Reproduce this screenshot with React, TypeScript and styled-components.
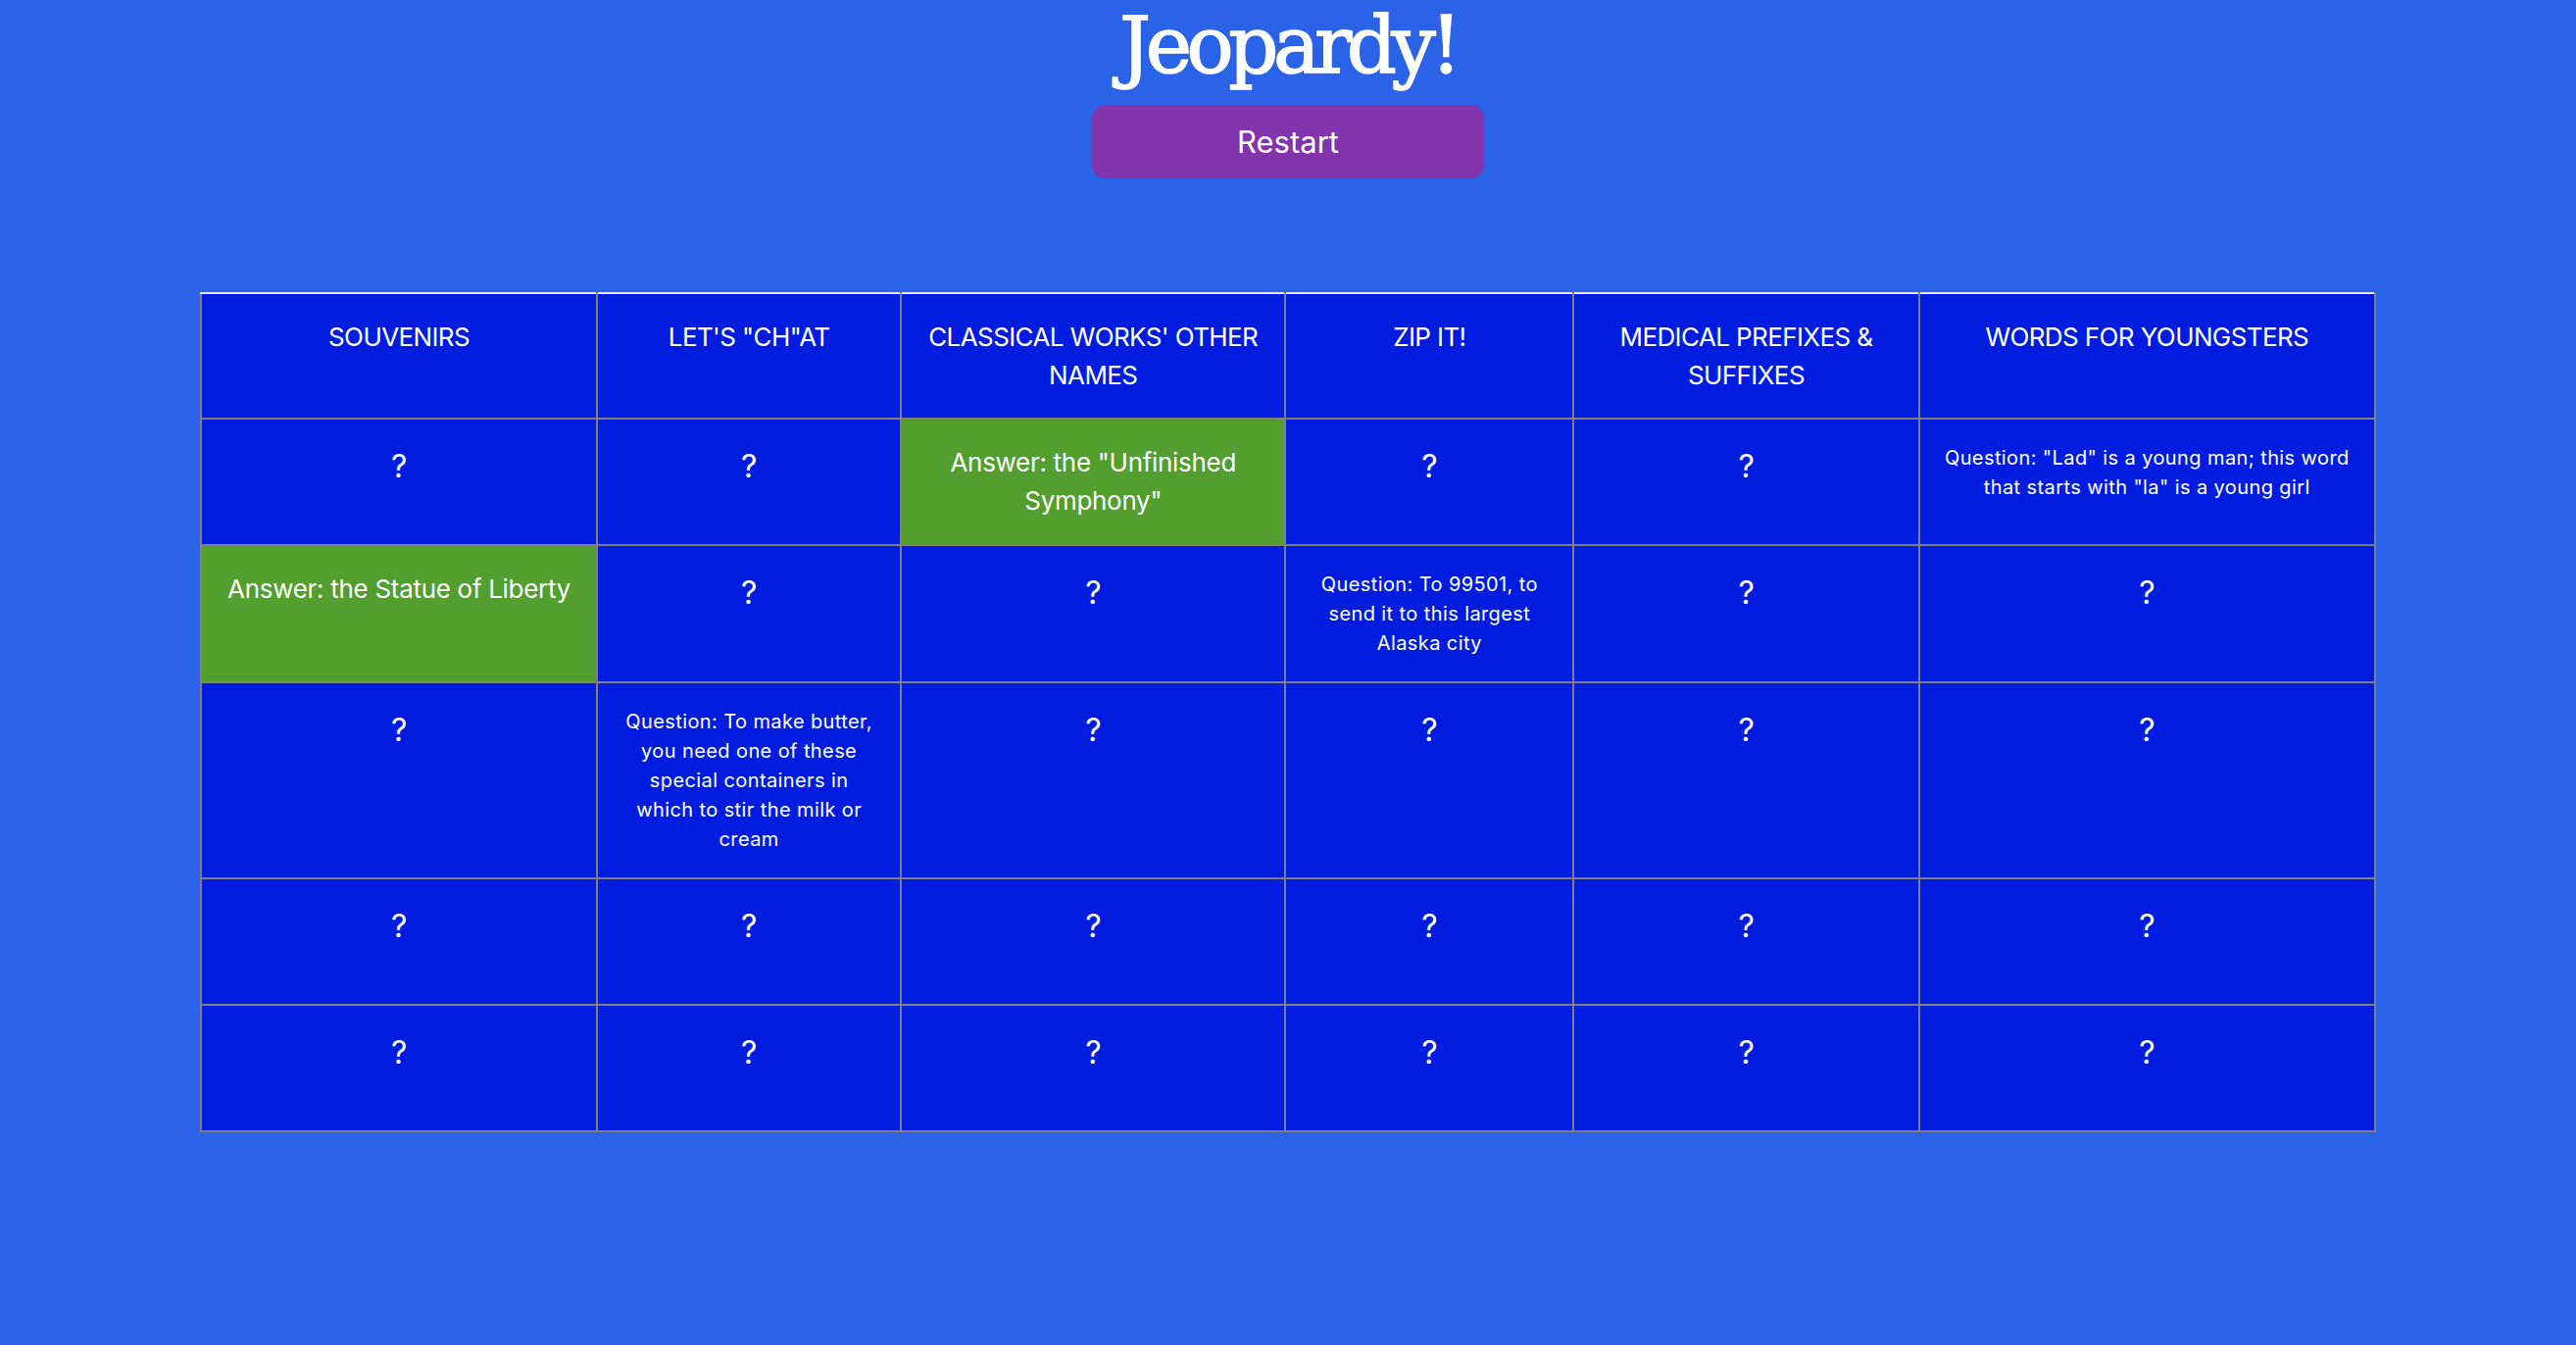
import React, { useState } from "react";
import styled, { createGlobalStyle } from "styled-components";

const GlobalStyle = createGlobalStyle`
  html, body {
    margin: 0;
    padding: 0;
    background: #2a63e8;
  }
  body {
    font-family: Inter, "Noto Sans", "Liberation Sans", sans-serif;
    color: #ffffff;
  }
`;

const Page = styled.main`
  min-height: 1372px;
  display: flex;
  flex-direction: column;
  align-items: center;
`;

const Title = styled.h1`
  margin: 0;
  height: 93px;
  font-family: "DejaVu Serif", "Liberation Serif", serif;
  font-weight: 400;
  font-size: 80px;
  line-height: 93px;
  color: #ffffff;
  letter-spacing: -5.5px;
  -webkit-text-stroke: 1.5px #ffffff;
`;

const RestartButton = styled.button`
  width: 400px;
  height: 75px;
  margin-top: 14px;
  border: none;
  border-radius: 14px;
  background: #8334ac;
  color: #ffffff;
  font-family: Inter, "Noto Sans", sans-serif;
  font-size: 31px;
  font-weight: 400;
  cursor: pointer;
`;

const Board = styled.table`
  width: 2220px;
  margin-top: 116px;
  border-collapse: collapse;
  table-layout: fixed;
  border: 2px solid #808080;
  border-top-color: #e6e6ea;
`;

const HeadCell = styled.th`
  padding: 24px;
  border: 2px solid #808080;
  border-top-color: #e6e6ea;
  background: #001ddf;
  vertical-align: top;
  font-size: 26px;
  font-weight: 400;
  line-height: 39px;
  letter-spacing: -0.6px;
  text-transform: uppercase;
`;

type CellState = "hidden" | "question" | "answer";

const Cell = styled.td<{ $state: CellState }>`
  box-sizing: border-box;
  height: 129px;
  padding: 24px;
  border: 2px solid #808080;
  background: ${(p) => (p.$state === "answer" ? "#529e2f" : "#001ddf")};
  vertical-align: top;
  text-align: center;
  font-size: ${(p) =>
    p.$state === "hidden" ? "32px" : p.$state === "question" ? "20px" : "26px"};
  line-height: 1.5;
  letter-spacing: ${(p) => (p.$state === "question" ? "0.4px" : "-0.3px")};
  cursor: pointer;
`;

const categories = [
  "Souvenirs",
  "Let's \"Ch\"at",
  "Classical Works' Other Names",
  "Zip It!",
  "Medical Prefixes & Suffixes",
  "Words for Youngsters",
];

const colWidths = [18.22, 13.98, 17.68, 13.26, 15.88, 20.98];

type CellData = { state: CellState; text: string };

const h: CellData = { state: "hidden", text: "?" };

const initialBoard: CellData[][] = [
  [
    h,
    h,
    { state: "answer", text: 'Answer: the "Unfinished Symphony"' },
    h,
    h,
    {
      state: "question",
      text: 'Question: "Lad" is a young man; this word that starts with "la" is a young girl',
    },
  ],
  [
    { state: "answer", text: "Answer: the Statue of Liberty" },
    h,
    h,
    {
      state: "question",
      text: "Question: To 99501, to send it to this largest Alaska city",
    },
    h,
    h,
  ],
  [
    h,
    {
      state: "question",
      text: "Question: To make butter, you need one of these special containers in which to stir the milk or cream",
    },
    h,
    h,
    h,
    h,
  ],
  [h, h, h, h, h, h],
  [h, h, h, h, h, h],
];

export default function App() {
  const [board] = useState(initialBoard);
  return (
    <>
      <GlobalStyle />
      <Page>
        <Title>Jeopardy!</Title>
        <RestartButton type="button">Restart</RestartButton>
        <Board>
          <colgroup>
            {colWidths.map((w, i) => (
              <col key={i} style={{ width: `${w}%` }} />
            ))}
          </colgroup>
          <thead>
            <tr>
              {categories.map((c) => (
                <HeadCell key={c}>{c}</HeadCell>
              ))}
            </tr>
          </thead>
          <tbody>
            {board.map((row, r) => (
              <tr key={r}>
                {row.map((cell, c) => (
                  <Cell key={c} $state={cell.state}>
                    {cell.text}
                  </Cell>
                ))}
              </tr>
            ))}
          </tbody>
        </Board>
      </Page>
    </>
  );
}
